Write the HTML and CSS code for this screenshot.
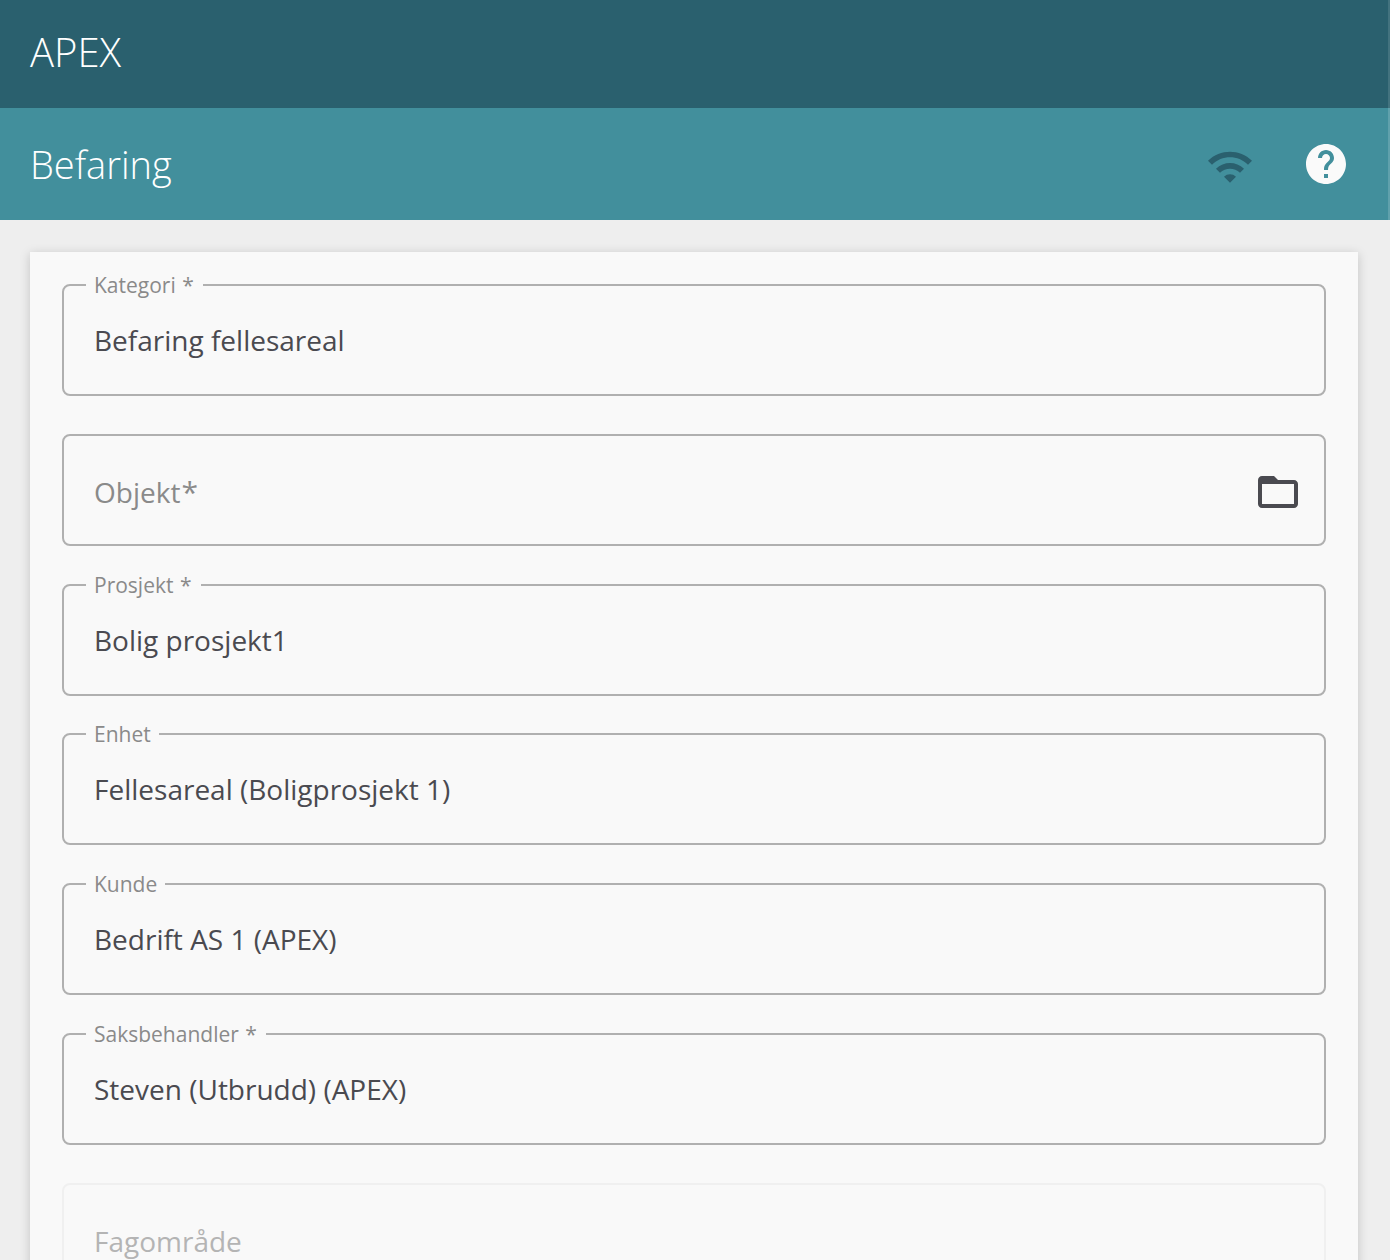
FILE: index.html
```html
<!DOCTYPE html>
<html lang="no">
<head>
<meta charset="utf-8">
<title>Befaring</title>
<link rel="stylesheet" href="styles.css">
</head>
<body>
<header class="topbar"><span class="brand">APEX</span></header>
<div class="subbar">
  <h1 class="title">Befaring</h1>
  <div class="actions">
    <svg class="icon-wifi" width="48" height="48" viewBox="0 -1.2 24 24" aria-hidden="true"><path fill="#2a606e" d="M1 9.2l2 2C7.97 6.23 16.03 6.23 21 11.2l2-2C16.93 3.13 7.08 3.13 1 9.2zM5 13.2l2 2c2.76-2.76 7.24-2.76 10 0l2-2C15.14 9.34 8.87 9.34 5 13.2zM9 17.2l3 3 3-3c-1.65-1.66-4.34-1.66-6 0z"/></svg>
    <svg class="icon-help" width="48" height="48" viewBox="0 0 24 24" aria-hidden="true"><path fill="#fafafa" d="M12 2C6.48 2 2 6.48 2 12s4.48 10 10 10 10-4.48 10-10S17.52 2 12 2zm1 17h-2v-2h2v2zm2.07-7.75l-.9.92C13.45 12.9 13 13.5 13 15h-2v-.5c0-1.1.45-2.1 1.17-2.83l1.24-1.26c.37-.36.59-.86.59-1.41 0-1.1-.9-2-2-2s-2 .9-2 2H8c0-2.21 1.79-4 4-4s4 1.79 4 4c0 .88-.36 1.68-.93 2.25z"/></svg>
  </div>
</div>
<main class="page">
  <section class="card">
    <div class="field"><span class="label">Kategori <span class="req">*</span></span><span class="value">Befaring fellesareal</span></div>
    <div class="field"><span class="placeholder">Objekt<span class="req-large">*</span></span>
      <svg class="icon-folder" width="48" height="48" viewBox="0 0 24 24" aria-hidden="true"><path fill="#4a4a50" d="M20 6h-8l-2-2H4c-1.1 0-1.99.9-1.99 2L2 18c0 1.1.9 2 2 2h16c1.1 0 2-.9 2-2V8c0-1.1-.9-2-2-2zm0 12H4V8h16v10z"/></svg>
    </div>
    <div class="field"><span class="label">Prosjekt <span class="req">*</span></span><span class="value">Bolig prosjekt1</span></div>
    <div class="field"><span class="label">Enhet</span><span class="value">Fellesareal (Boligprosjekt 1)</span></div>
    <div class="field"><span class="label">Kunde</span><span class="value">Bedrift AS 1 (APEX)</span></div>
    <div class="field"><span class="label">Saksbehandler <span class="req">*</span></span><span class="value">Steven (Utbrudd) (APEX)</span></div>
    <div class="field field-disabled"><span class="placeholder">Fagområde</span></div>
  </section>
</main>
</body>
</html>
```
FILE: styles.css
```css
html, body {
  margin: 0;
  height: 1260px;
  overflow: hidden;
}
body {
  background: #eeeeee;
  font-family: "Open Sans", sans-serif;
  color: #4a4a50;
}
.topbar {
  box-sizing: border-box;
  height: 108px;
  background: #2a606e;
  display: flex;
  align-items: center;
  padding: 0 30px 6px;
  border-right: 2px solid rgba(255, 255, 255, 0.12);
}
.brand, .title {
  font-family: "Open Sans", sans-serif;
  font-weight: 300;
  color: #fff;
}
.brand { font-size: 40px; }
.title {
  margin: 0;
  font-size: 38px;
}
.subbar {
  box-sizing: border-box;
  height: 112px;
  background: #428f9c;
  display: flex;
  align-items: center;
  justify-content: space-between;
  padding: 0 38px 0 30px;
  border-right: 2px solid rgba(255, 255, 255, 0.16);
}
.actions {
  display: flex;
  align-items: center;
  gap: 48px;
}
.actions svg { display: block; }
.page { padding: 32px 32px 0 30px; }
.card {
  background: #f9f9f9;
  padding: 32px 32px 0;
  box-shadow: 0 2px 10px rgba(0, 0, 0, 0.18);
}
.field {
  position: relative;
  box-sizing: border-box;
  height: 112px;
  margin-bottom: 37.75px;
  padding: 0 24px 0 30px;
  border: 2px solid #b0b0b0;
  border-radius: 8px;
  display: flex;
  align-items: center;
  justify-content: space-between;
}
.label {
  position: absolute;
  top: -14px;
  left: 22px;
  padding: 0 8px;
  background: #f9f9f9;
  font-size: 21px;
  line-height: 26px;
  color: #8a8a8a;
}
.req { margin: 0 1px; }
.req-large {
  margin-left: 1px;
  font-size: 30px;
  line-height: 1;
}
.value {
  font-size: 28px;
  line-height: 36px;
}
.placeholder {
  padding-top: 4px;
  font-size: 28px;
  line-height: 36px;
  color: #8a8a8a;
}
.field-disabled { border-color: #f0f0f0; }
.field-disabled .placeholder { color: #b4b4b4; }
.icon-folder {
  display: block;
  margin: 4px -2px 0 0;
}
```
